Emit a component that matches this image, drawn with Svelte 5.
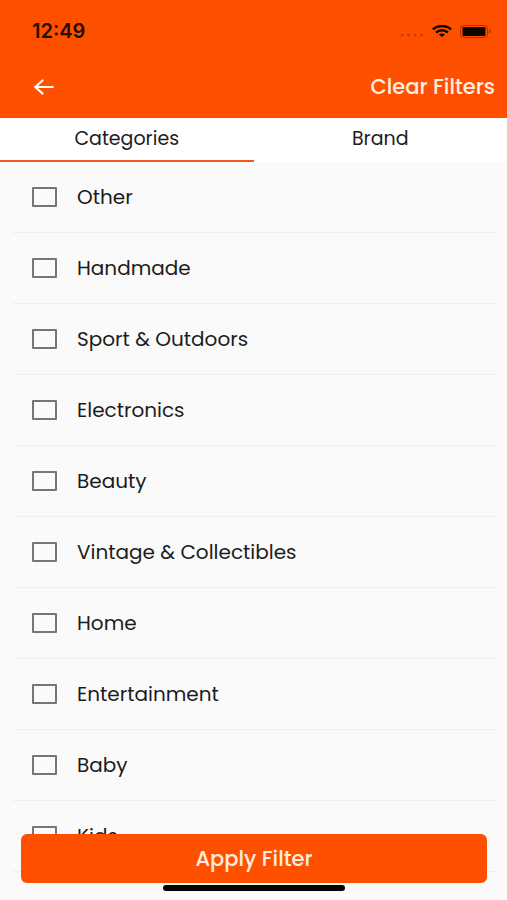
<script>
  const tabs = ['Categories', 'Brand'];
  const categories = [
    'Other',
    'Handmade',
    'Sport & Outdoors',
    'Electronics',
    'Beauty',
    'Vintage & Collectibles',
    'Home',
    'Entertainment',
    'Baby',
    'Kids'
  ];

  let activeTab = $state('Categories');
  let selected = $state([]);
</script>

<div class="screen">
  <header>
    <div class="status">
      <span class="time">12:49</span>
      <div class="indicators">
        <svg width="24" height="4" viewBox="0 0 24 4" aria-hidden="true">
          <g fill="#c84000">
            <circle cx="2" cy="2" r="1.5" />
            <circle cx="8.5" cy="2" r="1.5" />
            <circle cx="15" cy="2" r="1.5" />
            <circle cx="21.5" cy="2" r="1.5" />
          </g>
        </svg>
        <svg width="20" height="12" viewBox="0 0 20 12" aria-hidden="true">
          <g fill="none" stroke="#150600" stroke-width="2.4">
            <path d="M0.8 4.3C6 -0.2 14 -0.2 19.2 4.3" />
            <path d="M4 7.5C7.5 4.5 12.5 4.5 16 7.5" />
          </g>
          <path d="M6.8 9.5C8.6 8 11.4 8 13.2 9.5L10 12Z" fill="#150600" />
        </svg>
        <svg width="31" height="13" viewBox="0 0 31 13" aria-hidden="true">
          <rect x="0.5" y="0.5" width="27" height="12" rx="3" fill="none" stroke="#a83500" />
          <rect x="2.5" y="2" width="23" height="9" rx="1" fill="#100400" />
          <path d="M29 4.5C31.3 5.3 31.3 7.7 29 8.5Z" fill="#a83500" />
        </svg>
      </div>
    </div>
    <div class="toolbar">
      <button class="back" type="button" aria-label="Back">
        <svg width="20" height="16" viewBox="0 0 20 16" aria-hidden="true">
          <path
            d="M18.8 8H1.5M8.5 1.5L1.3 8L8.5 14.5"
            fill="none"
            stroke="#fff"
            stroke-width="2.2"
            stroke-linecap="round"
            stroke-linejoin="round"
          />
        </svg>
      </button>
      <button class="clear" type="button" onclick={() => (selected = [])}>Clear Filters</button>
    </div>
  </header>

  <div class="tabs" role="tablist">
    {#each tabs as tab}
      <button
        type="button"
        role="tab"
        aria-selected={activeTab === tab}
        class:active={activeTab === tab}
        onclick={() => (activeTab = tab)}>{tab}</button>
    {/each}
  </div>

  <ul>
    {#each categories as category}
      <li>
        <label>
          <input type="checkbox" value={category} bind:group={selected} />
          <span>{category}</span>
        </label>
      </li>
    {/each}
  </ul>

  <footer>
    <button class="apply" type="button">Apply Filter</button>
    <div class="home-bar"></div>
  </footer>
</div>

<style>
  :global(body) {
    margin: 0;
    background: #fafafa;
  }

  .screen {
    position: relative;
    display: flex;
    flex-direction: column;
    height: 100vh;
    overflow: hidden;
    font-family: Poppins, Inter, 'Liberation Sans', sans-serif;
    color: #1c1c1c;
  }

  button {
    margin: 0;
    padding: 0;
    border: 0;
    background: none;
    font-family: inherit;
    color: inherit;
    cursor: pointer;
  }

  svg {
    display: block;
  }

  header {
    flex: none;
    background: #ff5000;
  }

  .status {
    display: flex;
    justify-content: space-between;
    align-items: center;
    height: 62px;
    padding: 0 16px 0 32px;
  }

  .time {
    font-family: Inter, 'Liberation Sans', sans-serif;
    font-size: 20px;
    font-weight: 600;
    line-height: 24px;
    color: #260c00;
  }

  .indicators {
    display: flex;
    align-items: center;
    gap: 8px;
  }

  .indicators svg:first-child {
    margin-top: 8px;
  }

  .toolbar {
    display: flex;
    justify-content: space-between;
    align-items: center;
    height: 56px;
    padding: 0 12px 6px 32px;
    box-sizing: border-box;
  }

  .back {
    padding: 4px 2px;
  }

  .clear {
    font-size: 21px;
    font-weight: 500;
    line-height: 28px;
    color: #ffeee0;
  }

  .tabs {
    flex: none;
    display: flex;
    background: #fff;
  }

  .tabs button {
    flex: 1;
    height: 44px;
    border-bottom: 2px solid transparent;
    font-size: 19px;
    line-height: 24px;
  }

  .tabs .active {
    border-bottom-color: #f4551a;
  }

  ul {
    flex: 1;
    min-height: 0;
    margin: 0;
    padding: 0 11px 0 12px;
    overflow-y: auto;
    list-style: none;
    scrollbar-width: none;
  }

  li {
    border-bottom: 1px solid #f0f0f0;
  }

  label {
    display: flex;
    align-items: center;
    gap: 20px;
    height: 70px;
    padding-left: 20px;
    font-size: 20px;
    line-height: 28px;
    cursor: pointer;
  }

  input {
    appearance: none;
    flex: none;
    box-sizing: border-box;
    width: 25px;
    height: 20px;
    margin: 0;
    border: 2px solid #767676;
    border-radius: 1px;
  }

  input:checked {
    border-color: #ff5000;
    background: #ff5000;
  }

  footer {
    position: absolute;
    right: 0;
    bottom: 0;
    left: 0;
    padding: 0 20px 9px 21px;
  }

  .apply {
    display: block;
    width: 100%;
    height: 49px;
    border-radius: 6px;
    background: #ff5000;
    font-size: 21px;
    font-weight: 500;
    line-height: 28px;
    color: #ffeee0;
  }

  .home-bar {
    width: 39%;
    height: 6px;
    margin: 2px auto 0;
    border-radius: 3px;
    background: #000;
  }
</style>
